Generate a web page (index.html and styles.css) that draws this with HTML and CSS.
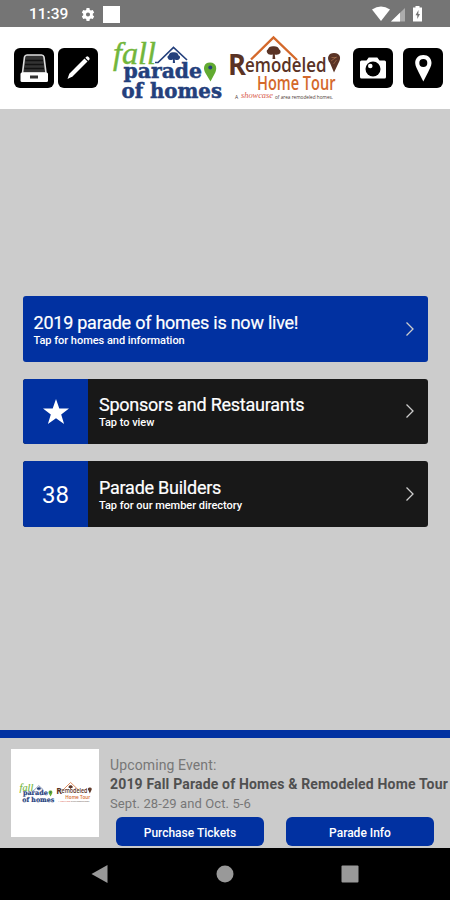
FILE: index.html
```html
<!DOCTYPE html>
<html lang="en">
<head>
    <meta charset="UTF-8">
    <meta name="viewport" content="width=device-width, initial-scale=1.0">
    <title>Parade of Homes</title>
    <link rel="stylesheet" href="styles.css">
</head>
<body>
    <div class="app">
        <div class="status-bar">
            <span class="clock">11:39</span>
            <svg class="gear" viewBox="0 0 24 24"><path fill-rule="evenodd" d="M9.5 1h5l.6 3.200 2 1.100 3-1.100 2.500 4.300L20.200 10.800v2.400l2.400 2.300-2.500 4.300-3-1.100-2 1.100-.6 3.200h-5l-.6-3.200-2-1.100-3 1.100-2.500-4.300 2.400-2.300v-2.400L1.400 8.500l2.500-4.300 3 1.100 2-1.100zM12 8.500a3.500 3.500 0 1 0 0 7 3.500 3.500 0 0 0 0-7z"/></svg>
            <span class="notice"></span>
            <svg class="signals" viewBox="0 0 54 18">
                <path d="M0 4.500Q9 -1.500 18 4.500L9 16z"/>
                <path opacity=".4" d="M19 16.500L33 3v13.500z"/>
                <path d="M19 16.500L28 7.800v8.700z"/>
                <path d="M43.500 2.500v-1.500h4v1.500h2.500v14h-9v-14z"/>
                <path class="bolt" d="M46.500 5l-3 5.200h1.800V14l2.700-5h-1.700z"/>
            </svg>
        </div>

        <header class="header">
            <a class="icon-btn" href="#">
                <svg viewBox="0 0 40 40">
                    <path fill="#333" stroke="#ddd" stroke-width="1.600" d="M8.500 25L10.500 9Q11 7 13 7h14.500q2 0 2.500 2l2 16z"/>
                    <path stroke="#111" stroke-width="1.400" d="M11.500 12.500h17.500M11 16.500h18.500M10.500 20.500h19.500"/>
                    <rect x="6.500" y="24.500" width="27.500" height="9.500" rx="1.500" fill="#fff"/>
                    <rect x="16" y="27.500" width="8" height="3" fill="#333"/>
                </svg>
            </a>
            <a class="icon-btn" href="#">
                <svg viewBox="0 0 40 40" fill="#fff">
                    <path d="M26.500 10.500l3 3L14.500 28.500 9.500 31l1.800-5.200z"/>
                    <path d="M27.300 9.700l1-1q1-.8 2 .1l1 1q.8 1 0 2l-1 1z"/>
                </svg>
            </a>
            <svg class="logo" viewBox="108 34 236 70">
                <defs>
                    <g id="logos">
                        <!-- Fall parade of homes -->
                        <text class="logo-fall" x="113" y="63.500" textLength="43" lengthAdjust="spacingAndGlyphs">fall</text>
                        <path fill="none" stroke="#24407c" stroke-width="1.700" d="M155 62.500h3L173.500 47.500 187 60"/>
                        <path fill="#24407c" d="M172.800 63l.2-3.500q-4 1.500-5-1-1.500-2 .8-3.300.7-3.200 4.700-2.900 4.300-.4 5 2.900 2.600 1.300 1 3.600-1.300 2-4.800.7l.4 3.500z"/>
                        <text class="logo-parade" x="123.500" y="78" textLength="78.500" lengthAdjust="spacingAndGlyphs">parade</text>
                        <text class="logo-parade" x="121.500" y="98" textLength="100.500" lengthAdjust="spacingAndGlyphs">of homes</text>
                        <path fill="#62ab31" d="M210 62.500c7 0 7.500 7 4.500 11.500L210.500 81.500 206 74c-3.500-5-2.500-11.500 4-11.500z"/>
                        <circle cx="210.300" cy="67.500" r="2" fill="#24407c"/>
                        <!-- Remodeled home tour -->
                        <path fill="none" stroke="#d4692b" stroke-width="2.400" d="M251 59.500L273.500 37.500 297 60"/>
                        <path fill="#5a3325" d="M272.500 59l.3-4.500q-4.500 1-5.500-1.500-1.500-2.500.7-3.700.8-3.300 5.500-3.100 4.700-.2 5.600 3 2.400 1.700 1 4-1.400 2-5.300 1.300l.5 4.500z"/>
                        <text class="logo-r" x="228" y="74.500" textLength="18" lengthAdjust="spacingAndGlyphs">R</text>
                        <text class="logo-remodeled" x="245" y="72" textLength="81.500" lengthAdjust="spacingAndGlyphs">emodeled</text>
                        <text class="logo-tour" x="257" y="90" textLength="78.500" lengthAdjust="spacingAndGlyphs">Home Tour</text>
                        <path fill="#5a3325" d="M334 53c6.500 0 7.500 5.500 4.500 10L334 72.500 330 63c-4-5-1.500-10 4-10z"/>
                        <path stroke="#c68a5c" stroke-width=".5" d="M331 61l5.500-4M331.500 57.500h5M333.500 64l3-4"/>
                        <text class="logo-tag" x="235" y="98.500">A</text>
                        <text class="logo-script" x="241" y="98" textLength="32" lengthAdjust="spacingAndGlyphs">showcase</text>
                        <text class="logo-tag" x="275" y="98.500" textLength="58" lengthAdjust="spacingAndGlyphs">of area remodeled homes.</text>
                    </g>
                </defs>
                <use href="#logos"/>
            </svg>
            <a class="icon-btn" href="#">
                <svg viewBox="0 0 40 40">
                    <path fill="#fff" d="M8.500 12.500h5l2.200-3h8.600l2.200 3h5q1.500 0 1.500 1.500v15q0 1.500-1.500 1.500h-23Q7 30.500 7 29V14q0-1.500 1.500-1.500z"/>
                    <circle cx="20" cy="21" r="7.500"/>
                    <circle cx="17.300" cy="18" r="2.300" fill="#fff"/>
                </svg>
            </a>
            <a class="icon-btn" href="#">
                <svg viewBox="0 0 40 40">
                    <path fill="#fff" fill-rule="evenodd" d="M20.300 7c5 0 8.200 3.500 8.200 8 0 3-2 6-3.300 9L20.300 33.500 15.500 24c-1.300-3-3.300-6-3.300-9 0-4.500 3.200-8 8.100-8zm0 4a4 4 0 1 0 0 8 4 4 0 0 0 0-8z"/>
                </svg>
            </a>
        </header>

        <main class="menu">
            <a class="card card-blue" href="#">
                <div class="card-text">
                    <h2>2019 parade of homes is now live!</h2>
                    <p>Tap for homes and information</p>
                </div>
                <svg class="chevron" viewBox="0 0 10 16"><path d="M1.500 1.500L8 8l-6.500 6.500"/></svg>
            </a>
            <a class="card" href="#">
                <div class="tile">
                    <svg class="star" viewBox="0 0 26 26"><path d="M13 0l3.300 9.400H26l-7.800 6 2.900 9.600L13 19.300 4.900 25l2.900-9.600L0 9.400h9.700z"/></svg>
                </div>
                <div class="card-text">
                    <h2>Sponsors and Restaurants</h2>
                    <p>Tap to view</p>
                </div>
                <svg class="chevron" viewBox="0 0 10 16"><path d="M1.500 1.500L8 8l-6.500 6.500"/></svg>
            </a>
            <a class="card" href="#">
                <div class="tile">38</div>
                <div class="card-text">
                    <h2>Parade Builders</h2>
                    <p>Tap for our member directory</p>
                </div>
                <svg class="chevron" viewBox="0 0 10 16"><path d="M1.500 1.500L8 8l-6.500 6.500"/></svg>
            </a>
        </main>

        <section class="event">
            <div class="thumb">
                <svg viewBox="108 34 236 70"><use href="#logos"/></svg>
            </div>
            <div class="event-info">
                <p class="event-label">Upcoming Event:</p>
                <p class="event-name">2019 Fall Parade of Homes &amp; Remodeled Home Tour</p>
                <p class="event-date">Sept. 28-29 and Oct. 5-6</p>
                <div class="event-actions">
                    <button>Purchase Tickets</button>
                    <button>Parade Info</button>
                </div>
            </div>
        </section>

        <nav class="nav-bar">
            <svg viewBox="0 0 18 18"><path d="M.5 9L16.500 0v18z"/></svg>
            <svg viewBox="0 0 18 18"><circle cx="9" cy="9" r="8.500"/></svg>
            <svg viewBox="0 0 18 18"><rect x=".5" y=".5" width="17" height="17" rx="1"/></svg>
        </nav>
    </div>
</body>
</html>
```

FILE: styles.css
```css
/* Basic reset */
* {
    box-sizing: border-box;
    margin: 0;
    padding: 0;
}

body {
    font-family: Roboto, sans-serif;
    background-color: #cccccc;
    color: #fff;
}

a {
    color: inherit;
    text-decoration: none;
}

svg {
    display: block;
    flex-shrink: 0;
}

.app {
    display: flex;
    flex-direction: column;
    width: 450px;
    height: 900px;
    overflow: hidden;
}

/* Status bar */
.status-bar {
    display: flex;
    align-items: center;
    height: 27px;
    padding: 1px 28px 0 29px;
    background-color: #757575;
    fill: #fff;
}

.clock {
    width: 52px;
    font-size: 15.5px;
    font-weight: 500;
}

.gear {
    width: 14px;
    height: 15px;
}

.notice {
    width: 17px;
    height: 17px;
    margin-left: 8px;
    background-color: #fff;
}

.signals {
    width: 54px;
    height: 18px;
    margin-left: auto;
    margin-right: -4px;
}

.bolt {
    fill: #757575;
}

/* Header */
.header {
    display: flex;
    align-items: center;
    height: 82px;
    padding: 0 7px 1px 14px;
    background-color: #fff;
}

.icon-btn {
    width: 40px;
    height: 40px;
    border-radius: 6px;
    background-color: #000;
}

.icon-btn + .icon-btn {
    margin-left: auto;
}

.icon-btn:nth-child(2) {
    margin-left: 4px;
}

.logo {
    width: 236px;
    height: 70px;
    margin: 2px 9px 0 10px;
}

.logo-fall {
    font: italic 31px "Liberation Serif", serif;
    fill: #72b63b;
    stroke: #72b63b;
    stroke-width: 0.4px;
}

.logo-parade {
    font: bold 21px "DejaVu Serif", serif;
    fill: #24407c;
    stroke: #24407c;
    stroke-width: 0.5px;
}

.logo-r {
    font: bold 28px "Open Sans", sans-serif;
    fill: #5a3325;
}

.logo-remodeled {
    font: 600 20px "Open Sans", sans-serif;
    fill: #5a3325;
}

.logo-tour {
    font: 600 19px "Open Sans", sans-serif;
    fill: #d4692b;
}

.logo-tag {
    font: 5px "Open Sans", sans-serif;
    fill: #4d3a35;
}

.logo-script {
    font: italic 9px "Liberation Serif", serif;
    fill: #d8584c;
}

/* Menu cards */
.menu {
    flex: 1;
    display: flex;
    flex-direction: column;
    justify-content: center;
    gap: 17px;
    padding: 0 22px 16px 23px;
}

.card {
    display: flex;
    align-items: center;
    height: 65.5px;
    padding-right: 13px;
    border-radius: 3px;
    background-color: #181818;
    overflow: hidden;
}

.card-blue {
    background-color: #0131a1;
}

.tile {
    display: flex;
    align-items: center;
    justify-content: center;
    width: 65px;
    height: 100%;
    padding-top: 2px;
    background-color: #0131a1;
    font-size: 24px;
}

.star {
    width: 26px;
    height: 26px;
    fill: #fff;
}

.card-text {
    flex: 1;
    padding: 3px 0 0 11px;
    white-space: nowrap;
}

.card-blue .card-text {
    padding-left: 10.5px;
}

.card h2 {
    font-size: 18px;
    font-weight: 400;
    line-height: 21px;
    letter-spacing: -0.24px;
    -webkit-text-stroke: 0.2px #fff;
}

.card p {
    font-size: 11px;
    font-weight: 500;
    line-height: 16px;
    letter-spacing: -0.03px;
}

.chevron {
    width: 10px;
    height: 16px;
    fill: none;
    stroke: #ccc;
    stroke-width: 1.3px;
}

/* Upcoming event */
.event {
    display: flex;
    height: 118.5px;
    padding: 11px 0 0 11px;
    border-top: 8.5px solid #0131a1;
    background-color: #cbcbcb;
}

.thumb {
    display: flex;
    align-items: center;
    justify-content: center;
    width: 88px;
    height: 88px;
    background-color: #fff;
}

.thumb svg {
    width: 75px;
    height: 23px;
}

.event-info {
    padding: 7.5px 0 0 11px;
    line-height: 19px;
    white-space: nowrap;
    color: #777;
}

.event-label {
    font-size: 14px;
    letter-spacing: 0.12px;
}

.event-name {
    font-size: 14px;
    font-weight: 700;
    letter-spacing: 0.17px;
    color: #505050;
}

.event-date {
    font-size: 13px;
    letter-spacing: 0.1px;
}

.event-actions {
    display: flex;
    gap: 22px;
    padding: 4px 0 0 6px;
}

button {
    width: 148px;
    height: 29px;
    padding-top: 2px;
    border: none;
    border-radius: 6px;
    background-color: #0131a1;
    color: #fff;
    font-family: inherit;
    font-size: 12px;
    font-weight: 500;
}

/* Android navigation */
.nav-bar {
    display: flex;
    justify-content: space-between;
    align-items: center;
    height: 52px;
    padding: 0 91px;
    background-color: #000;
    fill: #999;
}

.nav-bar svg {
    width: 18px;
    height: 18px;
}
```
